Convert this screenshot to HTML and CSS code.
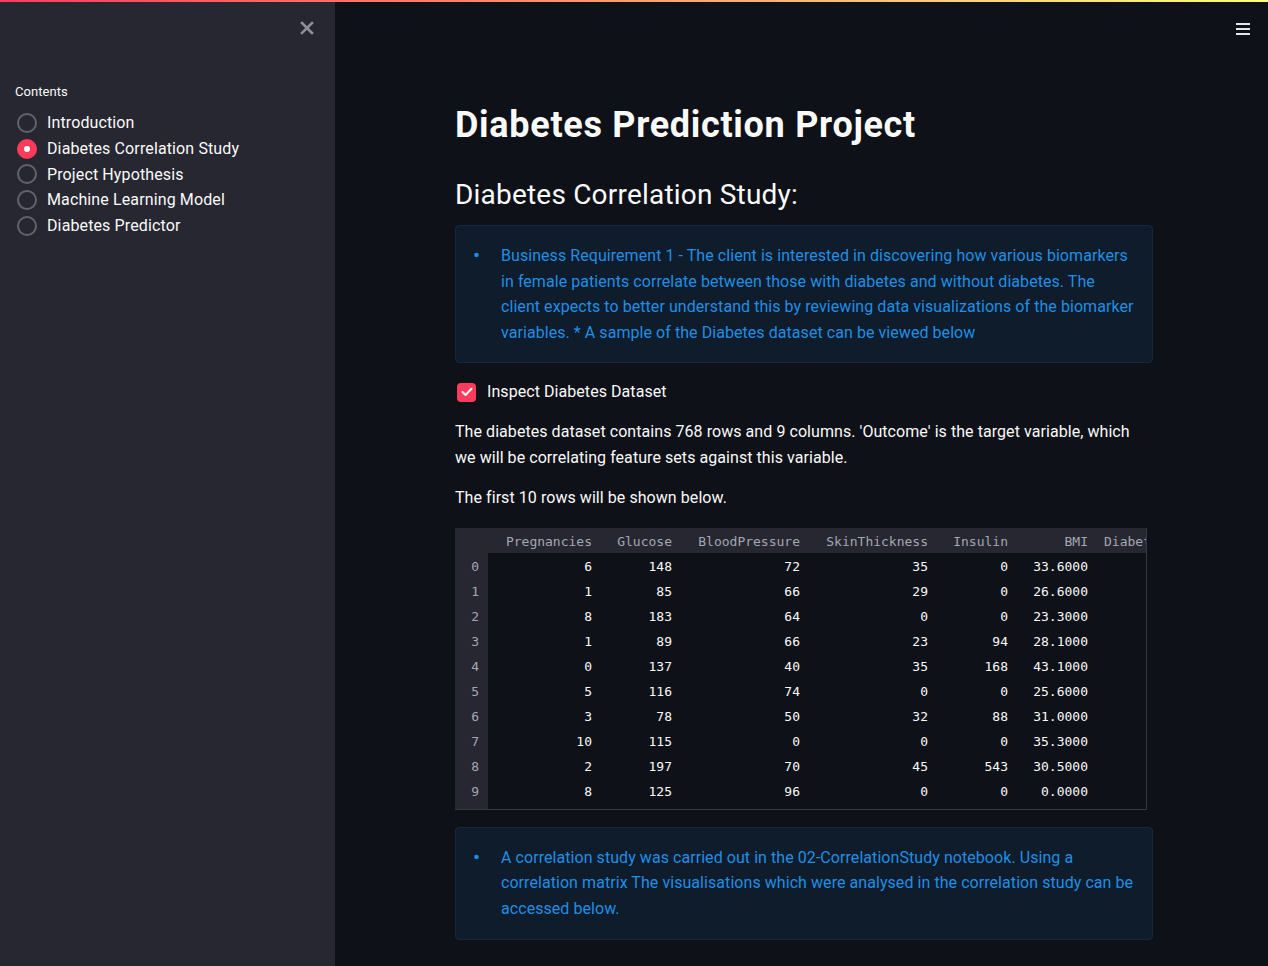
FILE: index.html
```html
<!DOCTYPE html>
<html lang="en">
<head>
<meta charset="utf-8">
<title>Diabetes Prediction Project</title>
<link rel="stylesheet" href="styles.css">
</head>
<body>
<div class="decoration"></div>
<div class="app">
  <aside class="sidebar">
    <div class="sidebar-top">
      <button class="close-btn" aria-label="Close sidebar">
        <svg width="14" height="14" viewBox="0 0 14 14"><path d="M2 2 L12 12 M12 2 L2 12" stroke="#8d8f97" stroke-width="2.6" stroke-linecap="square"/></svg>
      </button>
    </div>
    <div class="nav">
      <div class="nav-label">Contents</div>
      <div class="radio-list">
        <label class="radio"><span class="dot"></span><span>Introduction</span></label>
        <label class="radio selected"><span class="dot"></span><span>Diabetes Correlation Study</span></label>
        <label class="radio"><span class="dot"></span><span>Project Hypothesis</span></label>
        <label class="radio"><span class="dot"></span><span>Machine Learning Model</span></label>
        <label class="radio"><span class="dot"></span><span>Diabetes Predictor</span></label>
      </div>
    </div>
  </aside>
  <main class="main">
    <div class="toolbar">
      <button class="menu-btn" aria-label="Menu">
        <svg width="14" height="12" viewBox="0 0 14 12"><rect x="0" y="0" width="14" height="2" fill="#e6e6e6"/><rect x="0" y="5" width="14" height="2" fill="#e6e6e6"/><rect x="0" y="10" width="14" height="2" fill="#e6e6e6"/></svg>
      </button>
    </div>
    <div class="block">
      <h1 class="title">Diabetes Prediction Project</h1>
      <h2 class="subtitle">Diabetes Correlation Study:</h2>
      <div class="info">
        <ul>
          <li><span>Business Requirement 1 - The client is interested in discovering how various biomarkers in female patients correlate between those with diabetes and without diabetes. The client expects to better understand this by reviewing data visualizations of the biomarker variables. * A sample of the Diabetes dataset can be viewed below</span></li>
        </ul>
      </div>
      <label class="checkbox"><span class="box"><svg width="12" height="10" viewBox="0 0 12 10"><path d="M1.5 5 L4.5 8 L10.5 1.8" fill="none" stroke="#fff" stroke-width="2" stroke-linecap="round" stroke-linejoin="round"/></svg></span><span>Inspect Diabetes Dataset</span></label>
      <p class="para">The diabetes dataset contains 768 rows and 9 columns. 'Outcome' is the target variable, which we will be correlating feature sets against this variable.</p>
      <p class="para">The first 10 rows will be shown below.</p>
      <div class="frame">
        <table class="df">
          <colgroup>
            <col class="c-idx"><col class="c-preg"><col class="c-80"><col class="c-128"><col class="c-128"><col class="c-80"><col class="c-80"><col class="c-dpf"><col class="c-80"><col class="c-80">
          </colgroup>
          <thead>
            <tr><th class="idx"></th><th>Pregnancies</th><th>Glucose</th><th>BloodPressure</th><th>SkinThickness</th><th>Insulin</th><th>BMI</th><th>DiabetesPedigreeFunction</th><th>Age</th><th>Outcome</th></tr>
          </thead>
          <tbody>
            <tr><th class="idx">0</th><td>6</td><td>148</td><td>72</td><td>35</td><td>0</td><td>33.6000</td><td>0.6270</td><td>50</td><td>1</td></tr>
            <tr><th class="idx">1</th><td>1</td><td>85</td><td>66</td><td>29</td><td>0</td><td>26.6000</td><td>0.3510</td><td>31</td><td>0</td></tr>
            <tr><th class="idx">2</th><td>8</td><td>183</td><td>64</td><td>0</td><td>0</td><td>23.3000</td><td>0.6720</td><td>32</td><td>1</td></tr>
            <tr><th class="idx">3</th><td>1</td><td>89</td><td>66</td><td>23</td><td>94</td><td>28.1000</td><td>0.1670</td><td>21</td><td>0</td></tr>
            <tr><th class="idx">4</th><td>0</td><td>137</td><td>40</td><td>35</td><td>168</td><td>43.1000</td><td>2.2880</td><td>33</td><td>1</td></tr>
            <tr><th class="idx">5</th><td>5</td><td>116</td><td>74</td><td>0</td><td>0</td><td>25.6000</td><td>0.2010</td><td>30</td><td>0</td></tr>
            <tr><th class="idx">6</th><td>3</td><td>78</td><td>50</td><td>32</td><td>88</td><td>31.0000</td><td>0.2480</td><td>26</td><td>1</td></tr>
            <tr><th class="idx">7</th><td>10</td><td>115</td><td>0</td><td>0</td><td>0</td><td>35.3000</td><td>0.1340</td><td>29</td><td>0</td></tr>
            <tr><th class="idx">8</th><td>2</td><td>197</td><td>70</td><td>45</td><td>543</td><td>30.5000</td><td>0.1580</td><td>53</td><td>1</td></tr>
            <tr><th class="idx">9</th><td>8</td><td>125</td><td>96</td><td>0</td><td>0</td><td>0.0000</td><td>0.2320</td><td>54</td><td>1</td></tr>
            <tr class="pad"><th class="idx"></th><td></td><td></td><td></td><td></td><td></td><td></td><td></td><td></td><td></td></tr>
          </tbody>
        </table>
      </div>
      <div class="info info-2">
        <ul>
          <li><span>A correlation study was carried out in the 02-CorrelationStudy notebook. Using a correlation matrix The visualisations which were analysed in the correlation study can be accessed below.</span></li>
        </ul>
      </div>
    </div>
  </main>
</div>
</body>
</html>
```

FILE: styles.css
```css
* { box-sizing: border-box; }

html, body {
  margin: 0;
  padding: 0;
  height: 100%;
  background: #0e1117;
  color: #fafafa;
  font-family: Roboto, "Noto Sans", "Liberation Sans", sans-serif;
  letter-spacing: 0.06px;
  overflow: hidden;
}

.decoration {
  position: fixed;
  top: 0;
  left: 0;
  right: 0;
  height: 2px;
  background: linear-gradient(90deg, #ff3b5c, #fffd80);
  z-index: 10;
}

.app {
  display: flex;
  height: 100vh;
}

.sidebar {
  width: 335px;
  flex: 0 0 335px;
  background: #262730;
  display: flex;
  flex-direction: column;
}

.sidebar-top {
  display: flex;
  justify-content: flex-end;
  padding: 21px 21px 0 0;
  height: 60px;
}

.close-btn, .menu-btn {
  background: none;
  border: none;
  padding: 0;
  display: flex;
  cursor: pointer;
}

.nav {
  padding: 24px 0 0 15px;
}

.nav-label {
  font-size: 13px;
  line-height: 16px;
  color: #fafafa;
  margin-bottom: 10px;
}

.radio-list {
  display: flex;
  flex-direction: column;
}

.radio {
  display: flex;
  align-items: center;
  height: 25.7px;
  font-size: 16px;
  color: #fafafa;
  gap: 10px;
  padding-left: 2px;
  letter-spacing: 0.12px;
}

.radio .dot {
  width: 20px;
  height: 20px;
  border-radius: 50%;
  border: 2px solid #62646d;
  display: flex;
  align-items: center;
  justify-content: center;
  flex: 0 0 20px;
}

.radio.selected .dot {
  border-color: #ff3b5c;
  background: #ff3b5c;
}

.radio.selected .dot::after {
  content: "";
  width: 6px;
  height: 6px;
  border-radius: 50%;
  background: #fff;
}

.main {
  flex: 1;
  display: flex;
  flex-direction: column;
  position: relative;
}

.toolbar {
  display: flex;
  justify-content: flex-end;
  padding: 23px 18px 0 0;
  height: 40px;
}

.block {
  width: 698px;
  margin-left: 120px;
  display: flex;
  flex-direction: column;
}

.title {
  font-size: 36px;
  font-weight: 700;
  line-height: 44px;
  margin: 63px 0 0 0;
  letter-spacing: 0.7px;
}

.subtitle {
  font-size: 28px;
  font-weight: 400;
  line-height: 36px;
  margin: 30px 0 0 0;
  letter-spacing: 0.2px;
}

.info {
  margin-top: 12px;
  background: #0f1c2b;
  border: 1px solid #15293d;
  border-radius: 4px;
  padding: 17px 16.5px 17px 16px;
  color: #1f8fe5;
  font-size: 16px;
  line-height: 25.6px;
}

.info ul {
  margin: 0;
  padding: 0;
  list-style: none;
}

.info li {
  display: grid;
  grid-template-columns: 29px 1fr;
}

.info li::before {
  content: "\2022";
  padding-left: 1px;
  font-size: 21px;
  line-height: 25.6px;
}

.checkbox {
  display: flex;
  align-items: center;
  gap: 11px;
  margin-top: 16px;
  font-size: 16px;
  line-height: 25.6px;
  padding-left: 2px;
}

.checkbox .box {
  width: 19px;
  height: 19px;
  border-radius: 4px;
  background: #ff3b5c;
  display: flex;
  align-items: center;
  justify-content: center;
}

.para {
  margin: 14px 0 0 0;
  font-size: 16px;
  line-height: 25.6px;
}

.para + .para {
  margin-top: 15px;
}

.frame {
  margin-top: 17px;
  width: 692px;
  overflow: hidden;
  border-right: 1px solid #363842;
  border-bottom: 1px solid #363842;
}

.df {
  border-collapse: collapse;
  table-layout: fixed;
  width: 1004px;
  font-family: "DejaVu Sans Mono", "Liberation Mono", monospace;
  font-size: 13px;
  letter-spacing: 0;
}

.c-idx { width: 33px; }
.c-preg { width: 112px; }
.c-80 { width: 80px; }
.c-128 { width: 128px; }
.c-dpf { width: 203px; }

.df th, .df td {
  height: 25px;
  padding: 2px 8px 0;
  text-align: right;
  white-space: nowrap;
  overflow: hidden;
  font-weight: 400;
}

.df thead th {
  background: #262730;
  color: #a3a8b4;
}

.df td {
  color: #fafafa;
  background: #0e1117;
}

.df th.idx {
  background: #262730;
  color: #a3a8b4;
  padding-right: 9px;
}

.df tr.pad th, .df tr.pad td {
  height: 6px;
  padding: 0;
}

.info-2 {
  margin-top: 17px;
}
```
